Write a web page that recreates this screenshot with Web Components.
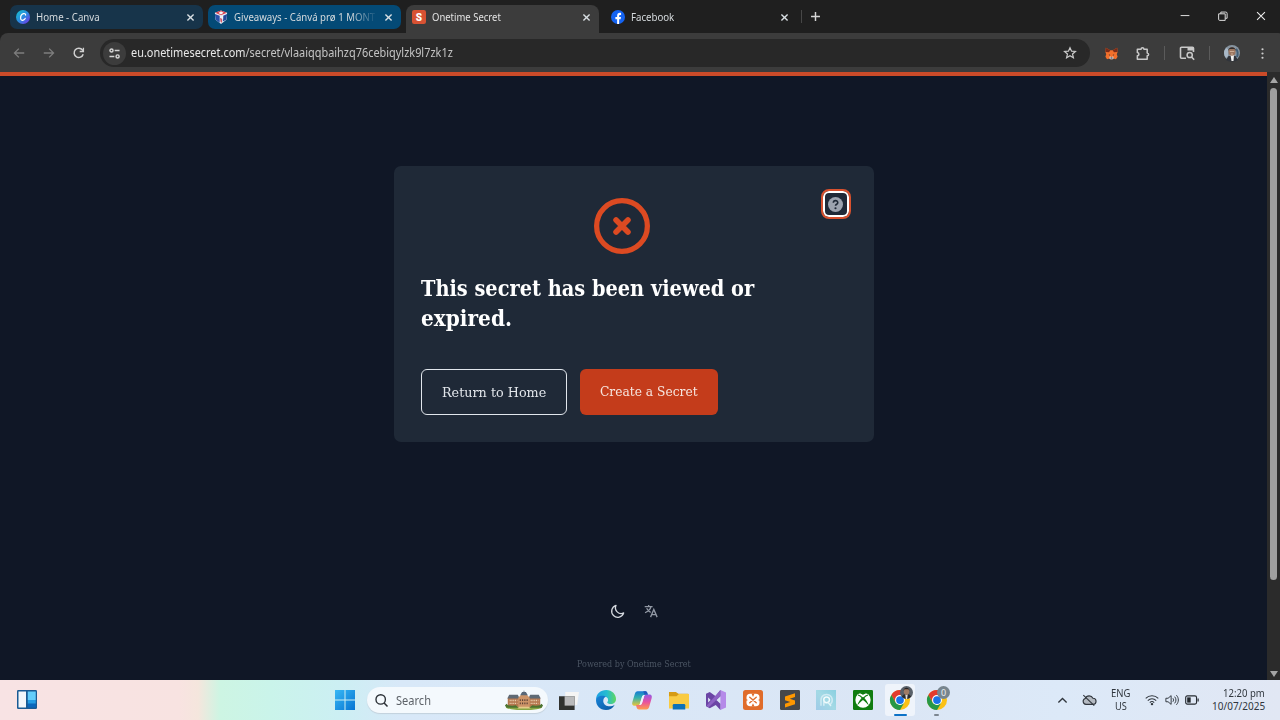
<!DOCTYPE html>
<html lang="en">
<head>
<meta charset="utf-8">
<title>Onetime Secret</title>
<style>
    html, body{
        margin:0;
        height:100%;
        overflow:hidden;
        background:#101726;
    }
    body{
        display:flex;
        flex-direction:column;
        font-family:"Noto Sans","Open Sans",sans-serif;
    }
</style>
</head>
<body>
<browser-tabs>
    <browser-tab icon="canva" color="#17344a" width="63.5">Home - Canva</browser-tab>
    <browser-tab icon="giveaway" color="#044a76" width="141" class="fade">Giveaways - Cánvá prø 1 MONT</browser-tab>
    <browser-tab icon="onetime" active width="69">Onetime Secret</browser-tab>
    <browser-tab icon="facebook" width="43">Facebook</browser-tab>
</browser-tabs>
<browser-toolbar></browser-toolbar>
<page-view>
    <secret-card>
        <fit-text slot="title" width="333.5">This secret has been viewed or</fit-text>
        <fit-text slot="title" width="90.5">expired.</fit-text>
        <secret-button slot="actions" kind="outline" width="104">Return to Home</secret-button>
        <secret-button slot="actions" kind="solid" width="98">Create a Secret</secret-button>
    </secret-card>
</page-view>
<task-bar></task-bar>

<script>
const icons = {
    canva: `<defs><linearGradient id="a" x1="0" y1="0" x2="1" y2="1"><stop offset="0" stop-color="#13c5cc"/><stop offset=".5" stop-color="#2b8be0"/><stop offset="1" stop-color="#7c2ae8"/></linearGradient></defs><circle cx="8" cy="8" r="8" fill="url(#a)"/><path d="M11 5.8C11 4.3 9.8 3.8 8.5 4.2 6.4 4.9 5.1 7.6 5.3 9.7c.2 1.8 1.5 2.4 2.9 1.9 1.1-.4 1.9-1.2 2.3-2" fill="none" stroke="#fff" stroke-width="1.4" stroke-linecap="round"/>`,
    giveaway: `<path d="M1 3l7-2.5L15 3l-.8 8L8 16l-6.200-5z" fill="#e8edf5"/><path d="M1 4.500l5.500 2v8L2 11z" fill="#2950a8"/><path d="M15 4.500l-4.500 2-.5 6.500L14 11z" fill="#27489a"/><path d="M1.500 3L8 .5 14.500 3 8 6z" fill="#d93a48"/><path d="M5 3.500l3-2 3 1.500-3 2zM8.500 8l2-1v4z" fill="#f6f7fa"/><path d="M7 9l2 1v4.500l-1.500-1z" fill="#cf4450"/>`,
    onetime: `<rect width="16" height="16" rx="2.5" fill="#d85233"/><text x="8" y="12" text-anchor="middle" font-family="Roboto,sans-serif" font-weight="900" font-size="11.5" fill="#fff">S</text>`,
    facebook: `<circle cx="8" cy="8" r="8" fill="#1463f2"/><path d="M7 16v-5.300H5V8h2V6.600c0-2.400 1.200-3.500 3.200-3.500.6 0 1 .1 1.300.2v2.300h-1C9.600 5.600 9.300 6 9.300 6.900V8h2.100l-.4 2.700H9.300V16z" fill="#fff"/>`,
    close: `<path d="M4.200 4.200l7.600 7.600m0-7.600l-7.600 7.600" stroke="#d9dfe3" stroke-width="1.7"/>`,
    plus: `<path d="M8 2.500v11M2.500 8h11" stroke="#d5d5d5" stroke-width="1.8"/>`,
    winmin: `<path d="M3 7.500h10" stroke="#e4e4e4" stroke-width="1.1"/>`,
    winmax: `<path d="M3 5.500h7.500V13H4.200A1.200 1.200 0 0 1 3 11.800zM5.500 5.300V3.500h5.600a1.600 1.600 0 0 1 1.600 1.600v5.500h-2" fill="none" stroke="#e4e4e4" stroke-width="1.1"/>`,
    winclose: `<path d="M3.500 3.500l9 9m0-9l-9 9" stroke="#eee" stroke-width="1.2"/>`,
    back: `<path d="M14 8H3m4.800-5L2.800 8l5 5" fill="none" stroke="#7d7d7d" stroke-width="1.5"/>`,
    forward: `<path d="M2 8h11M8.200 3l5 5-5 5" fill="none" stroke="#7d7d7d" stroke-width="1.5"/>`,
    reload: `<path d="M12.800 9.400A5.300 5.300 0 1 1 12 4.600L13.200 6" fill="none" stroke="#d0d0d0" stroke-width="1.7"/><path d="M13.800 2v5H8.800V5.500h3.500V2z" fill="#d0d0d0"/>`,
    tune: `<circle cx="4.300" cy="4.300" r="1.900"/><path d="M8.200 4.300h6M1.800 11.600h6"/><circle cx="11.800" cy="11.600" r="1.900"/>`,
    star: `<path d="M8 1.900l1.800 4 4.400.4-3.300 2.900 1 4.300L8 11.200l-3.900 2.300 1-4.300-3.300-2.900 4.400-.4z" fill="none" stroke="#c9c9c9" stroke-width="1.4"/>`,
    fox: `<path d="M1 1l5.500 3h3L15 1l.5 5-1 3 1 3-2 3-3-1-1.200 1.200H6.700L5.500 14l-3 1-2-3 1-3-1-3z" fill="#f2702c"/><path d="M1 1l5.500 3L5 6.500.5 6zM15 1L9.500 4 11 6.500l4.500-.5z" fill="#7b2b18"/><path d="M6 11.500l2 1 2-1 .5 2.500-1.200 1.200H6.700L5.500 14z" fill="#dde1e7"/><path d="M4.500 9l2 .8-.6 1zM11.500 9l-2 .8.6 1zM6.700 13h2.600v1.200H6.700z" fill="#29242a"/>`,
    puzzle: `<path d="M2.500 3.500h4c0-2.200 3-2.200 3 0h3.500v4c2 .2 2 2.800 0 3v3.500H2.500v-3.500c2.200-.3 2.200-3.200 0-3.500z" fill="none" stroke="#c9c9c9" stroke-width="1.6" stroke-linejoin="round"/>`,
    lens: `<path d="M7 13.200H2.500A1 1 0 0 1 1.500 12.200V3.300a1 1 0 0 1 1-1h11a1 1 0 0 1 1 1V7" fill="none" stroke="#c9c9c9" stroke-width="1.6"/><path d="M8.500 2h6v3.500h-6z" fill="#c9c9c9"/><circle cx="10.700" cy="10" r="2.600" fill="none" stroke="#c9c9c9" stroke-width="1.5"/><path d="M12.500 12l2.700 2.800" stroke="#c9c9c9" stroke-width="1.6"/>`,
    avatar: `<circle cx="8" cy="8" r="8" fill="#8794a0"/><path d="M2 3a8 8 0 0 0 0 10l2-2V4z" fill="#a9b9c8"/><path d="M12 4c2 2 2 5 1 8" stroke="#425f77" stroke-width="2" fill="none"/><path d="M2 15l2.500-4h7l2.500 4-3 1.500H5z" fill="#30343b"/><path d="M6.500 10h3.500l-.5 6h-2z" fill="#f2f2f2"/><ellipse cx="8" cy="6.500" rx="3.500" ry="4.300" fill="#9b755f"/><path d="M4.300 6C4 1 12 1 11.700 6L10.500 4h-5z" fill="#302d2d"/><path d="M5.800 6.500h4.500M7 9h2" stroke="#e0c4ad" stroke-width=".7"/>`,
    user: `<circle cx="8" cy="8" r="8" fill="#59616a"/><path d="M2 13l3-3h6l3 3a8 8 0 0 1-12 0z" fill="#2c2c2e"/><path d="M6.500 10.500h3L8.700 16H7.300z" fill="#ddd"/><ellipse cx="8" cy="6.800" rx="3.400" ry="4.200" fill="#a07b64"/><path d="M4.500 6C4 1 12 1 11.500 6L10.500 4h-5z" fill="#262323"/>`,
    dots: `<circle cx="8" cy="2.800" r="1.350" fill="#cfcfcf"/><circle cx="8" cy="8" r="1.350" fill="#cfcfcf"/><circle cx="8" cy="13.200" r="1.350" fill="#cfcfcf"/>`,
    expired: `<circle cx="8" cy="8" r="7.250" fill="none" stroke="#dc4a22" stroke-width="1.5"/><path d="M6.300 6.300l3.400 3.400m0-3.400L6.300 9.700" stroke="#dc4a22" stroke-width="1.6" stroke-linecap="round"/>`,
    help: `<circle cx="8" cy="8" r="8" fill="#9ca3af"/><path d="M5.700 6.100c0-3 4.700-3 4.700-.1 0 1.700-2.400 1.700-2.400 3.300" fill="none" stroke="#1f2937" stroke-width="1.7"/><circle cx="8" cy="12" r="1.150" fill="#1f2937"/>`,
    moon: `<path d="M14.500 10.200A7 7 0 1 1 5.800 1.500a6.500 6.500 0 0 0 8.700 8.700z" fill="none" stroke="#d5d9df" stroke-width="1.5" stroke-linejoin="round"/>`,
    translate: `<path d="M.8 3h9M5.300 1v2M8 3c-.7 3-3.200 5.500-6.800 7M3 4.800c1 2 2.600 3.700 4.600 4.700M7.500 15l3.700-8.700L15 15M8.800 12.200h4.900" fill="none" stroke="#9299a5" stroke-width="1.5"/>`,
    widgets: `<rect width="16" height="15.200" rx="1" fill="#195a94"/><path d="M1.200 1.200h6v12.800h-6z" fill="#f1f6fb"/><path d="M8.600 1.200H15V8H8.600z" fill="#63cdfb"/><path d="M8.600 8H15v3H8.600z" fill="#229ce5"/><path d="M8.600 11H15v3H8.600z" fill="#0867bd"/>`,
    start: `<defs><linearGradient id="a" x1="0" y1="0" x2="1" y2="1"><stop offset="0" stop-color="#37b8f5"/><stop offset="1" stop-color="#0774d2"/></linearGradient></defs><path d="M0 0h7.600v7.600H0zM8.400 0H16v7.600H8.400zM0 8.400h7.600V16H0zM8.400 8.400H16V16H8.400z" fill="url(#a)"/>`,
    search: `<circle cx="7" cy="6.700" r="5.800" fill="none" stroke="#2b3036" stroke-width="1.7"/><path d="M11.200 11l4.200 4.300" stroke="#2b3036" stroke-width="1.9"/>`,
    taskview: `<path d="M5 1.500h11L14.500 12H5z" fill="#f5f5f4"/><path d="M0 5h12.500v11H0z" fill="#30322f"/><path d="M4.500 5h8v7.500h-8z" fill="#b9babb"/>`,
    edge: `<defs><linearGradient id="a" x1="0" y1="0" x2="1" y2="0"><stop offset="0" stop-color="#1d9fe3"/><stop offset=".55" stop-color="#26bdd0"/><stop offset="1" stop-color="#61d85c"/></linearGradient><linearGradient id="b" x1="0" y1="0" x2="1" y2="1"><stop offset="0" stop-color="#1985da"/><stop offset="1" stop-color="#0756a0"/></linearGradient></defs><path d="M0 8C0 3 3.600 0 8.200 0 13 0 16 3.600 16 7.200c0 2.600-1.900 4-4 4-1.900 0-3-.7-3-1.300 0-.4.700-.8.700-1.900C9.700 6 7.800 5 5.500 5 3 5 1 6.300 0 8z" fill="url(#a)"/><path d="M0 8c.2-2 2.300-3.500 5-3.500 1.400 0 2.500.3 3.200.9C5 5.800 4.500 12.500 10 13c1.800.2 3.600-.3 5-1.200C13.600 14.600 11 16 8 16c-5 0-8-3.600-8-8z" fill="url(#b)"/>`,
    copilot: `<defs><linearGradient id="a" x1="0" y1="0" x2="0" y2="1"><stop offset="0" stop-color="#1479d5"/><stop offset=".45" stop-color="#33b2ad"/><stop offset="1" stop-color="#eac437"/></linearGradient><linearGradient id="b" x1="0" y1="0" x2="0" y2="1"><stop offset="0" stop-color="#955be6"/><stop offset=".5" stop-color="#e750a1"/><stop offset="1" stop-color="#ff9b4b"/></linearGradient></defs><path d="M4.500 1h6c1 0 1.500.5 1.800 1.500L12.800 4H9.700c-1 0-1.500.8-1.800 1.800L6.300 11c-.3 1-.9 1.500-1.900 1.500H2C.2 12.500-.2 11 .3 9.500l2-6.500C2.700 1.700 3.300 1 4.500 1z" fill="url(#a)"/><path d="M11.500 15.500h-6c-1 0-1.500-.5-1.800-1.500L3.200 12h3.100c1 0 1.500-.8 1.800-1.800L9.700 5c.3-1 .9-1.500 1.900-1.500H14c1.800 0 2.200 1.500 1.700 3l-2 7c-.4 1.300-1 2-2.200 2z" fill="url(#b)"/><path d="M10.500 1c1 0 1.500.5 1.800 1.500l.3 1H9.900L9 1z" fill="#2259bd"/><path d="M7.900 5.800C8.200 4.800 8.700 4 9.700 4h.5c-.3.300-.4.600-.5 1l-1.600 5.200c-.3 1-.8 1.800-1.800 1.800h-.5c.3-.3.400-.6.500-1z" fill="#eef3fc"/>`,
    folder: `<path d="M0 1.500h5.500L7.500 3H15a1 1 0 0 1 1 1v9H0z" fill="#d69b14"/><path d="M0 5h6l2-1.800h8v11.500H0z" fill="#f9cb43"/><path d="M3 12.200a1 1 0 0 1 1-1h8a1 1 0 0 1 1 1v3.300H3z" fill="#0d72b9"/>`,
    vs: `<path d="M11.500 0L16 2v12l-4.500 2z" fill="#b58ae9"/><path d="M11.500 0v5L3 13l-3-2V5l3-2 8.500 8v5L7.800 12 3 14.500 0 13V3l3-1.500L7.800 5z" fill="#6b45a5"/><path d="M11.500 0v5L3 13l-1 .8-1.500-1.200z" fill="#8d62c4"/><path d="M1.700 6v4l2-2z" fill="#dfe7f5"/>`,
    xampp: `<rect width="16" height="16" rx="2" fill="#e06c2b"/><rect x="2.800" y="3" width="10.400" height="10" rx="3" fill="#fff"/><path d="M6.800 2.800h2.400L8 5.500zM6.800 13.200h2.400L8 10.500zM2.600 7l1.200 1-1.200 1zM13.400 7l-1.200 1 1.200 1z" fill="#e06c2b"/><path d="M5.400 5.800l5.200 4.400m0-4.400l-5.200 4.400" stroke="#e06c2b" stroke-width="1.1" stroke-linecap="round"/>`,
    sublime: `<rect width="16" height="16" rx="1" fill="#46484a"/><path d="M4 5.200l8-2.600v3L7.800 7l4.200 1.300v3L4 13.900v-3l4.200-1.300L4 8.200z" fill="#ff9800"/>`,
    round: `<defs><linearGradient id="a" x1="1" y1="0" x2="0" y2="1"><stop offset="0" stop-color="#8acfe0"/><stop offset=".5" stop-color="#a3d9e5"/><stop offset="1" stop-color="#9fcbe8"/></linearGradient></defs><rect width="16" height="16" fill="url(#a)"/><path d="M4 12.500V8a4.500 4.500 0 1 1 7 3.800" fill="none" stroke="#cfeaf3" stroke-width="1.2"/><circle cx="8.500" cy="7.800" r="2.300" fill="none" stroke="#f2fbfc" stroke-width="1.2"/><path d="M6.300 9v3.500M9.500 9.800l2.500 3" fill="none" stroke="#e2f4f9"/>`,
    xbox: `<rect width="16" height="16" rx="1" fill="#107c10"/><circle cx="8" cy="8" r="6.100" fill="#fff"/><path d="M4.600 2.900C5.800 2.600 7.100 3.200 8 3.900c.9-.7 2.200-1.300 3.400-1-1.900-1.700-4.900-1.700-6.800 0z" fill="#107c10"/><path d="M3.300 12.700C4 9.800 6 7 8 5.400c2 1.600 4 4.400 4.700 7.300-1.200-1.700-3-3.500-4.700-4.700-1.700 1.200-3.500 3-4.700 4.700z" fill="#107c10"/><path d="M4 4c1.500.3 2.800 1.500 3.600 2.500M12 4c-1.500.3-2.800 1.500-3.600 2.500" fill="none" stroke="#107c10" stroke-width=".9"/>`,
    chrome: `<circle cx="8" cy="8" r="8" fill="#fbc116"/><path d="M8 4h6.930A8 8 0 0 0 1.070 4L4.500 10z" fill="#e33b2e"/><path d="M1.070 4A8 8 0 0 0 8 16l3.500-6L8 12 4.500 10z" fill="#279847"/><circle cx="8" cy="8" r="4" fill="#fff"/><circle cx="8" cy="8" r="3.100" fill="#1a73e8"/>`,
    up: `<path d="M2 11l6-6 6 6" fill="none" stroke="#30363d" stroke-width="1.9"/>`,
    cloud: `<path d="M4.500 13A3.500 3.500 0 0 1 3.700 6.200 4.800 4.800 0 0 1 12.500 6 3.500 3.500 0 0 1 12.600 13z" fill="#b4bac2" stroke="#31373e" stroke-width="1.3"/><path d="M1.500 2.500l12.500 12" stroke="#31373e" stroke-width="1.3"/>`,
    wifi: `<path d="M.8 6.200c4-4 10.400-4 14.400 0M3.200 8.700c2.800-2.800 6.800-2.800 9.600 0M5.500 11c1.500-1.500 3.500-1.500 5 0" fill="none" stroke="#30363d" stroke-width="1.2"/><circle cx="8" cy="12.700" r="1.400" fill="#30363d"/>`,
    sound: `<path d="M1 6h2.500L7 3v10l-3.500-3H1zM9 6c1 1.200 1 2.800 0 4M11 4.200c2 2.200 2 5.400 0 7.600M13 2.500c3 3.300 3 7.700 0 11" fill="none" stroke="#30363d" stroke-width="1.1"/>`,
    battery: `<rect x=".8" y="3.300" width="12.400" height="9.400" rx="1.800" fill="none" stroke="#262b31" stroke-width="1.3"/><path d="M2.500 5h4v6h-4z" fill="#22272c"/><path d="M14.300 6.300h1.400v3.400h-1.400z" fill="#262b31"/>`
};

// building shown at the end of the search box
icons.palace = `<ellipse cx="20" cy="18" rx="19" ry="3" fill="#86a644"/><path d="M3 8h34v9.500H3z" fill="#b5774f"/><path d="M2.500 9l2-4h9l2 4zM24.500 9l2-4h9l2 4z" fill="#5f6a74"/><path d="M14 8l3-3h6l3 3v10H14z" fill="#cd9468"/><path d="M16 5.500L18 2h4l2 3.500zM19.300 3L20 0l.7 3z" fill="#596777"/><path d="M5 11h8M27 11h8M5 14h8M27 14h8" stroke="#f0d9bb" stroke-width="1.5" stroke-dasharray="1 .9"/><path d="M15.500 10.500h9M15.500 14h9" stroke="#5e4338" stroke-width="1.8" stroke-dasharray="1.2 1.2"/><path d="M0 16.500l1.500-2 2 1.500 4 .5 4-.5 2 2h13l2-2 4 .5 4-.5 2-1.500 1.500 2-2 2H2z" fill="#4c7330"/><path d="M15 17.500h10l2 1.800H13z" fill="#e5cb89"/>`;

class UiIcon extends HTMLElement{
    constructor(){
        super();
        this.attachShadow({mode:'open'});
    }
    connectedCallback(){
        const name = this.getAttribute('name');
        const w = this.getAttribute('size') || 16;
        const h = this.getAttribute('height') || w;
        const box = name === 'palace' ? '0 0 40 22' : '0 0 16 16';
        this.shadowRoot.innerHTML = `
        <style>
            :host{ display:block; flex:none; }
            svg{ display:block; overflow:visible; }
        </style>
        <svg width="${w}" height="${h}" viewBox="${box}">${icons[name]}</svg>`;
    }
}
window.customElements.define('ui-icon', UiIcon);

// one line of text, stretched or squeezed to the given width
class FitText extends HTMLElement{
    constructor(){
        super();
        this.attachShadow({mode:'open'});
        this.shadowRoot.innerHTML = `
        <style>
            :host{ display:block; flex:none; white-space:nowrap; }
            span{ display:inline-block; transform-origin:0 50%; }
        </style>
        <span><slot></slot></span>`;
    }
    connectedCallback(){
        this.style.width = this.getAttribute('width') + 'px';
        FitText.all.push(this);
    }
    fit(){
        const span = this.shadowRoot.querySelector('span');
        span.style.transform = `scaleX(${this.getAttribute('width') / span.offsetWidth})`;
    }
}
FitText.all = [];
window.customElements.define('fit-text', FitText);

class BrowserTab extends HTMLElement{
    constructor(){
        super();
        this.attachShadow({mode:'open'});
    }
    connectedCallback(){
        this.shadowRoot.innerHTML = `
        <style>
            :host{
                box-sizing:border-box;
                display:flex;
                align-items:center;
                width:193px;
                height:24px;
                margin-right:5.2px;
                padding:0 6.5px 0 6px;
                border-radius:7px;
                background:${this.getAttribute('color') || 'transparent'};
                color:#d5dadd;
                font-size:11px;
                line-height:16px;
            }
            :host([active]){
                height:28px;
                padding-bottom:4px;
                border-radius:8px 8px 0 0;
                background:#3c3c3c;
                color:#e3e3e3;
            }
            .label{ flex:1; margin-left:6px; overflow:hidden; }
            :host(.fade) .label{ -webkit-mask:linear-gradient(90deg,#000 116px,transparent 143px); }
        </style>
        <ui-icon name="${this.getAttribute('icon')}" size="14"></ui-icon>
        <div class="label"><fit-text width="${this.getAttribute('width')}"><slot></slot></fit-text></div>
        <ui-icon name="close" size="13"></ui-icon>`;
    }
}
window.customElements.define('browser-tab', BrowserTab);

class BrowserTabs extends HTMLElement{
    constructor(){
        super();
        this.attachShadow({mode:'open'});
        this.shadowRoot.innerHTML = `
        <style>
            :host{
                box-sizing:border-box;
                display:flex;
                align-items:flex-start;
                flex:none;
                height:33px;
                padding:5px 12px 0 10px;
                background:#1f1f1f;
            }
            .sep{ width:1px; height:13px; margin:5px 7px 0 -2px; background:#474747; }
            .new{ margin-top:5px; }
            .window{ display:flex; gap:24px; margin:4px 0 0 auto; }
        </style>
        <slot></slot>
        <div class="sep"></div>
        <ui-icon class="new" name="plus" size="13"></ui-icon>
        <div class="window">
            <ui-icon name="winmin" size="14"></ui-icon>
            <ui-icon name="winmax" size="14"></ui-icon>
            <ui-icon name="winclose" size="14"></ui-icon>
        </div>`;
    }
}
window.customElements.define('browser-tabs', BrowserTabs);

class BrowserToolbar extends HTMLElement{
    constructor(){
        super();
        this.attachShadow({mode:'open'});
        this.shadowRoot.innerHTML = `
        <style>
            :host{
                display:flex;
                flex:none;
                height:39px;
                background:#1f1f1f;
            }
            .bar{
                display:flex;
                align-items:center;
                flex:1;
                padding:1px 10px 0 12px;
                border-radius:8px 8px 0 0;
                background:#3c3c3c;
            }
            .nav{ display:flex; gap:16px; }
            .url{
                box-sizing:border-box;
                display:flex;
                align-items:center;
                width:990px;
                height:28px;
                margin-left:14px;
                padding:0 13px 0 3px;
                border-radius:14px;
                background:#282828;
                color:#c4c4c4;
                font-size:12px;
                line-height:18px;
            }
            .url b{ color:#e8e8e8; font-weight:400; }
            .tune{
                display:grid;
                place-items:center;
                width:23px;
                height:23px;
                margin-right:5px;
                border-radius:50%;
                background:#3c3c3c;
                fill:none;
                stroke:#d4d4d4;
                stroke-width:1.8;
            }
            .star{ margin-left:auto; }
            .tools{ display:grid; grid-template-columns:31px 31px 13px 32px 13px 32px 28px; justify-items:center; align-items:center; margin-left:6px; }
            i{ width:1px; height:14px; background:#5b5b5b; }
        </style>
        <div class="bar">
            <div class="nav">
                <ui-icon name="back" size="14"></ui-icon>
                <ui-icon name="forward" size="14"></ui-icon>
                <ui-icon name="reload" size="14"></ui-icon>
            </div>
            <div class="url">
                <div class="tune"><ui-icon name="tune" size="13"></ui-icon></div>
                <fit-text width="322"><b>eu.onetimesecret.com</b>/secret/vlaaiqqbaihzq76cebiqylzk9l7zk1z</fit-text>
                <ui-icon class="star" name="star" size="14"></ui-icon>
            </div>
            <div class="tools">
                <ui-icon name="fox" size="13"></ui-icon>
                <ui-icon name="puzzle" size="15"></ui-icon>
                <i></i>
                <ui-icon name="lens" size="16"></ui-icon>
                <i></i>
                <ui-icon name="avatar" size="16"></ui-icon>
                <ui-icon name="dots" size="13"></ui-icon>
            </div>
        </div>`;
    }
}
window.customElements.define('browser-toolbar', BrowserToolbar);

class SecretButton extends HTMLElement{
    constructor(){
        super();
        this.attachShadow({mode:'open'});
    }
    connectedCallback(){
        this.shadowRoot.innerHTML = `
        <style>
            :host{
                box-sizing:border-box;
                display:block;
                height:46px;
                padding:12px 20px;
                border-radius:6px;
                background:#c43c1b;
                color:#f6e5df;
                font:13.5px/20px "DejaVu Serif",serif;
            }
            :host([kind="outline"]){
                border:1.5px solid #e1e6ec;
                background:none;
                color:#e1e5ea;
            }
        </style>
        <fit-text width="${this.getAttribute('width')}"><slot></slot></fit-text>`;
    }
}
window.customElements.define('secret-button', SecretButton);

class SecretCard extends HTMLElement{
    constructor(){
        super();
        this.attachShadow({mode:'open'});
        this.shadowRoot.innerHTML = `
        <style>
            :host{
                box-sizing:border-box;
                display:block;
                width:480px;
                height:276px;
                padding:23px 23px 26px 27px;
                border-radius:7px;
                background:#1f2937;
            }
            header{
                display:flex;
                justify-content:space-between;
                height:84px;
            }
            .state{ margin:9px 0 0 173px; }
            .help{
                box-sizing:border-box;
                display:grid;
                place-items:center;
                width:30px;
                height:30px;
                border:2px solid #d8512e;
                border-radius:8px;
                box-shadow:inset 0 0 0 2px #fff;
            }
            h1{
                margin:0;
                color:#fff;
                font:bold 22px/30px "DejaVu Serif",serif;
            }
            .actions{ display:flex; gap:13px; margin-top:36px; }
        </style>
        <header>
            <ui-icon class="state" name="expired" size="56"></ui-icon>
            <div class="help"><ui-icon name="help" size="15"></ui-icon></div>
        </header>
        <h1><slot name="title"></slot></h1>
        <div class="actions"><slot name="actions"></slot></div>`;
    }
}
window.customElements.define('secret-card', SecretCard);

class PageView extends HTMLElement{
    constructor(){
        super();
        this.attachShadow({mode:'open'});
        this.shadowRoot.innerHTML = `
        <style>
            :host{
                display:flex;
                flex:1;
                min-height:0;
                background:#101726;
            }
            main{
                box-sizing:border-box;
                display:flex;
                flex-direction:column;
                align-items:center;
                width:1267px;
                padding-top:90px;
                border-top:4px solid #cb4b29;
            }
            .tools{ display:flex; gap:19px; margin:162px 0 0 1px; }
            .powered{
                margin-top:39px;
                color:#4b5563;
                font:9.5px/14px "DejaVu Serif",serif;
            }
            .scroll{
                display:flex;
                flex-direction:column;
                align-items:center;
                justify-content:space-between;
                width:13px;
                padding:5px 0 3px;
                box-sizing:border-box;
                background:#2b2b2b;
            }
            .thumb{ width:7px; height:492px; margin:5px 0 auto; border-radius:4px; background:#9f9f9f; }
            .arrow{ border:4.5px solid transparent; border-top:0; border-bottom:6px solid #a5a5a5; }
            .down{ transform:rotate(180deg); }
        </style>
        <main>
            <slot></slot>
            <div class="tools">
                <ui-icon name="moon" size="14"></ui-icon>
                <ui-icon name="translate" size="14"></ui-icon>
            </div>
            <fit-text class="powered" width="114">Powered by Onetime Secret</fit-text>
        </main>
        <div class="scroll">
            <div class="arrow"></div>
            <div class="thumb"></div>
            <div class="arrow down"></div>
        </div>`;
    }
}
window.customElements.define('page-view', PageView);

class TaskApp extends HTMLElement{
    constructor(){
        super();
        this.attachShadow({mode:'open'});
        this.shadowRoot.innerHTML = `
        <style>
            :host{
                position:relative;
                display:grid;
                place-items:center;
                width:36.8px;
                height:40px;
            }
            :host([active])::before{
                content:"";
                position:absolute;
                inset:4px 3px 4px 3px;
                border-radius:3px;
                background:#eff4fb;
            }
            :host([running])::after{
                content:"";
                position:absolute;
                bottom:4px;
                width:5px;
                height:2.5px;
                border-radius:2px;
                background:#7c8690;
            }
            :host([active])::after{ width:13px; background:#0d72c7; }
            ui-icon{ position:relative; }
            ::slotted(*){ position:absolute; left:18.5px; top:5.5px; }
        </style>
        <ui-icon name="${this.getAttribute('icon')}" size="20"></ui-icon>
        <slot></slot>`;
    }
}
window.customElements.define('task-app', TaskApp);

const apps = ['taskview','edge','copilot','folder','vs','xampp','sublime','round','xbox'];

class TaskBar extends HTMLElement{
    constructor(){
        super();
        this.attachShadow({mode:'open'});
        this.shadowRoot.innerHTML = `
        <style>
            :host{
                display:flex;
                align-items:center;
                flex:none;
                height:40px;
                padding-left:17px;
                background:linear-gradient(90deg,#f8e3e4 0,#f8e3e1 180px,#f5e6dd 198px,#cdf5e3 220px,#caf4ea 270px,#cceff3 340px,#d8e8f8 400px,#dbe6f5 900px,#dce9f8 1060px,#e1e7f4 100%);
                color:#30363d;
                font-size:10px;
            }
            .start{ margin-left:298px; }
            .search{
                box-sizing:border-box;
                display:flex;
                align-items:center;
                width:181px;
                height:26px;
                margin:0 2.5px 0 12px;
                padding:0 4px 0 8px;
                border-radius:13px;
                background:#f4f9fd;
                box-shadow:0 1px 1px #c3d1dc;
                color:#5d6268;
                font-size:12px;
            }
            .search fit-text{ margin-left:8px; }
            .palace{ margin-left:auto; }
            .apps{ display:flex; }
            .user{
                display:grid;
                place-items:center;
                width:13px;
                height:13px;
                border-radius:50%;
                background:#77858e;
                color:#e9eef0;
                font-size:9px;
                line-height:13px;
            }
            .tray{ display:flex; align-items:center; margin:0 15px 0 auto; }
            .lang{ display:grid; justify-items:center; margin:0 15px 0 15px; line-height:13px; }
            .status{ display:flex; align-items:center; gap:6px; }
            .clock{ display:grid; justify-items:end; margin-left:13px; line-height:13px; }
        </style>
        <ui-icon name="widgets" size="20"></ui-icon>
        <ui-icon class="start" name="start" size="20"></ui-icon>
        <div class="search">
            <ui-icon name="search" size="13"></ui-icon>
            <fit-text width="35">Search</fit-text>
            <ui-icon class="palace" name="palace" size="40" height="21"></ui-icon>
        </div>
        <div class="apps">
            ${apps.map(a => `<task-app icon="${a}"></task-app>`).join('')}
            <task-app icon="chrome" running active><ui-icon name="user" size="13"></ui-icon></task-app>
            <task-app icon="chrome" running><div class="user">0</div></task-app>
        </div>
        <div class="tray">
            <ui-icon name="up" size="11"></ui-icon>
            <ui-icon name="cloud" size="14" style="margin-left:14px"></ui-icon>
            <div class="lang">
                <fit-text width="19">ENG</fit-text>
                <fit-text width="12">US</fit-text>
            </div>
            <div class="status">
                <ui-icon name="wifi" size="14"></ui-icon>
                <ui-icon name="sound" size="14"></ui-icon>
                <ui-icon name="battery" size="14"></ui-icon>
            </div>
            <div class="clock">
                <fit-text width="42">12:20 pm</fit-text>
                <fit-text width="53">10/07/2025</fit-text>
            </div>
        </div>`;
    }
}
window.customElements.define('task-bar', TaskBar);

FitText.all.forEach(t => t.fit());
</script>
</body>
</html>
